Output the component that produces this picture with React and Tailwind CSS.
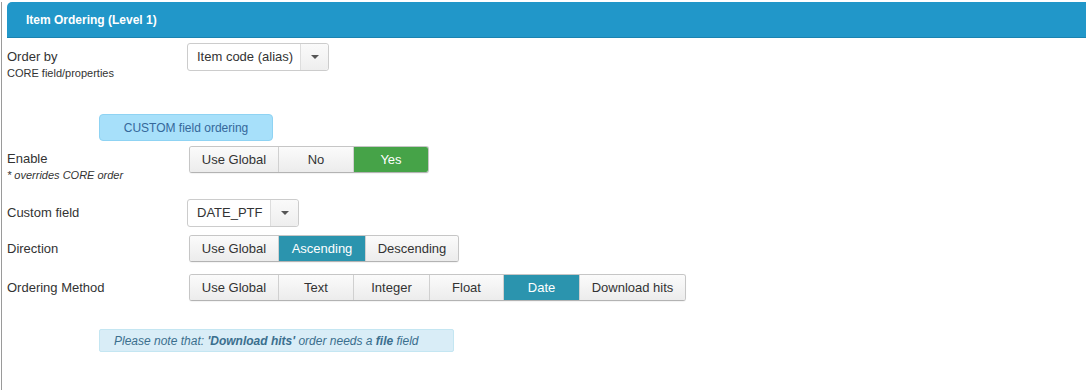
import React from 'react'

const Caret = () => (
  <svg width="8" height="4" viewBox="0 0 8 4"><path d="M0 0h8L4 4z" fill="#555" /></svg>
)

const Select = ({ value, textW }) => (
  <div className="flex h-[28px] rounded-[3px] border border-[#cccccc] bg-white text-[13px] text-[#333]">
    <div className="flex items-center whitespace-nowrap px-[9px]" style={{ width: textW }}>{value}</div>
    <div className="flex w-[28px] items-center justify-center border-l border-[#dddddd] bg-gradient-to-b from-[#fafafa] to-[#eeeeee] rounded-r-[3px]">
      <Caret />
    </div>
  </div>
)

const Group = ({ items, active, color }) => (
  <div className="flex h-[27px] rounded-[3px] border border-[#c6c6c6] border-b-[#b3b3b3] text-[13px] text-[#333] overflow-hidden shadow-[0_1px_1px_rgba(0,0,0,0.05)]">
    {items.map(([label, w], i) => (
      <div
        key={label}
        className={
          'flex items-center justify-center whitespace-nowrap ' +
          (i > 0 ? 'border-l border-[#d0d0d0] ' : '') +
          (label === active
            ? color + ' text-white'
            : 'bg-gradient-to-b from-[#fbfbfb] to-[#ececec]')
        }
        style={{ width: w }}
      >
        {label}
      </div>
    ))}
  </div>
)

const Label = ({ children, sub }) => (
  <div className="w-[180px] shrink-0">
    <div className="text-[13px] leading-[18px] text-[#333]">{children}</div>
    {sub}
  </div>
)

export default function App() {
  return (
    <div className="bg-white pl-[1px] h-[390px] font-['Liberation_Sans',Arial,sans-serif]">
      <div className="h-full border-l border-[#9a9a9a] pl-[5px]">
        <div className="mt-[2px] flex h-[36px] items-center rounded-tl-[5px] border-b border-[#1b83b0] bg-[#2197c9] pl-[19px] text-[12px] font-bold text-white">
          Item Ordering (Level 1)
        </div>

        <div className="mt-[5px] flex h-[37px]">
          <Label sub={<div className="text-[11px] leading-[14px] text-[#333]">CORE field/properties</div>}>
            <div className="pt-[5px]">Order by</div>
          </Label>
          <Select value="Item code (alias)" textW={112} />
        </div>

        <div className="mt-[34px] ml-[92px] flex h-[27px] w-[174px] items-center justify-center rounded-[4px] border border-[#8fd3f3] bg-[#a7e0fa] text-[12px] text-[#35689a]">
          CUSTOM field ordering
        </div>

        <div className="mt-[5px] flex h-[36px]">
          <Label sub={<div className="text-[11px] italic leading-[14px] text-[#333]">* overrides CORE order</div>}>
            <div className="pt-[4px]">Enable</div>
          </Label>
          <div className="ml-[2px]">
            <Group items={[['Use Global', 88], ['No', 75], ['Yes', 75]]} active="Yes" color="bg-[#46a348]" />
          </div>
        </div>

        <div className="mt-[17px] flex items-center">
          <Label>Custom field</Label>
          <Select value="DATE_PTF" textW={82} />
        </div>

        <div className="mt-[8px] flex items-center">
          <Label>Direction</Label>
          <div className="ml-[2px]">
            <Group items={[['Use Global', 88], ['Ascending', 87], ['Descending', 93]]} active="Ascending" color="bg-[#2b94ae]" />
          </div>
        </div>

        <div className="mt-[12px] flex items-center">
          <Label>Ordering Method</Label>
          <div className="ml-[2px]">
            <Group
              items={[['Use Global', 88], ['Text', 75], ['Integer', 76], ['Float', 74], ['Date', 76], ['Download hits', 106]]}
              active="Date"
              color="bg-[#2b94ae]"
            />
          </div>
        </div>

        <div className="mt-[28px] ml-[92px] flex h-[23px] w-[355px] items-center rounded-[2px] border border-[#c4e6f2] bg-[#d9edf7] pl-[14px] text-[12px] italic text-[#3b6f8e]">
          Please note that:&nbsp;<b>'Download hits'</b>&nbsp;order needs a&nbsp;<b>file</b>&nbsp;field
        </div>
      </div>
    </div>
  )
}
